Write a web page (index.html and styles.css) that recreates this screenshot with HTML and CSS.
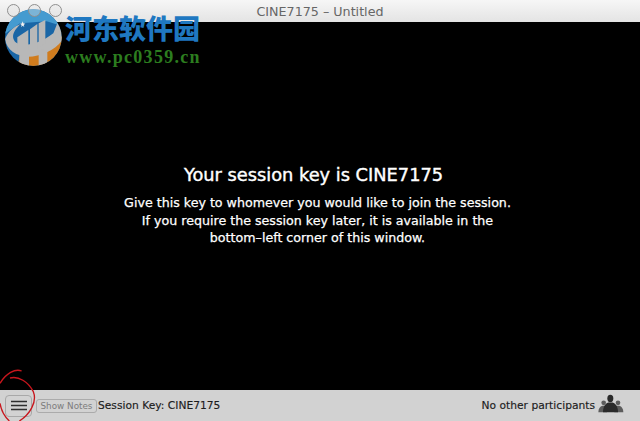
FILE: index.html
```html
<!DOCTYPE html>
<html>
  <head>
    <meta charset="UTF-8" />
    <title>CINE7175 - Untitled</title>
    <link rel="stylesheet" href="styles.css">
  </head>
  <body>
    <main class="window">
      <div class="titlebar">
        <div class="title">CINE7175 – Untitled</div>
      </div>
      <div class="stage">
        <h1>Your session key is CINE7175</h1>
        <p>Give this key to whomever you would like to join the session.<br>If you require the session key later, it is available in the<br>bottom–left corner of this window.</p>
      </div>
      <div class="bottom-bar">
        <div class="menu-button">
          <svg width="18" height="11" viewBox="0 0 18 11">
            <path d="M1 1.500h16M1 5.500h16M1 9.500h16" stroke="#2e2e2e" stroke-width="1.700" fill="none"/>
          </svg>
        </div>
        <div class="notes-button">Show Notes</div>
        <div class="session-key">Session Key: CINE7175</div>
        <div class="participants">No other participants</div>
        <svg class="people" width="28" height="19" viewBox="22 12 84 56">
          <g fill="#5c5c5c">
            <circle cx="42" cy="38" r="7"/>
            <path d="M26 66c0-10 5-17 12-19h8c4 2 6 6 6 19z"/>
            <circle cx="85" cy="38" r="7"/>
            <path d="M74 66c0-13 2-17 6-19h9c7 2 12 9 12 19z"/>
          </g>
          <g fill="#2a2a2a">
            <ellipse cx="62" cy="25" rx="9" ry="11"/>
            <path d="M40 66c0-15 6-26 16-29h13c10 3 16 14 16 29z"/>
          </g>
        </svg>
      </div>
      <svg class="red-circle" width="50" height="56" viewBox="0 0 150 168">
        <g fill="none" stroke="#c8161d" stroke-width="4">
          <path d="M65 18C45 10 18 25 0 55"/>
          <path d="M30 39C55 32 85 50 100 80C112 110 90 148 58 168"/>
          <path d="M0 115C4 138 14 155 28 168"/>
        </g>
      </svg>
      <div class="watermark">
        <svg class="logo" width="60" height="60" viewBox="9 24 180 180">
          <defs>
            <clipPath id="disc"><circle cx="100" cy="113" r="85"/></clipPath>
          </defs>
          <g clip-path="url(#disc)">
            <rect x="0" y="0" width="200" height="210" fill="#1a66a6"/>
            <path d="M0 0H200V82L140 64 60 70 0 112z" fill="#459bd0"/>
            <path d="M50 210 60 165 120 160 190 105 200 210z" fill="#d07c1e"/>
            <path d="M15 118C25 92 45 78 62 72 42 90 32 110 45 125 60 140 110 140 160 100L172 70C185 85 192 105 186 122 165 150 120 170 85 170 50 170 20 150 15 118z" fill="#b8b8b8"/>
            <path d="M52 112 85 90V150H52z" fill="#b8b8b8"/>
            <path d="M90 88 112 72V145H90z" fill="#b8b8b8"/>
            <path d="M116 70 136 60V130L116 142z" fill="#b8b8b8"/>
            <path d="M58 160H87V205H58z" fill="#b8b8b8"/>
            <path d="M116 155 142 140V205H116z" fill="#b8b8b8"/>
            <path d="M68 64l2 6 6 1-5 4 2 6-5-4-5 4 2-6-5-4 6-1z" fill="#f2f2f2"/>
          </g>
        </svg>
        <div class="watermark-text">
          <div class="site-name">河东软件园</div>
          <div class="site-url">www.pc0359.cn</div>
        </div>
      </div>
      <div class="traffic-lights">
        <div class="traffic-light"></div>
        <div class="traffic-light"></div>
        <div class="traffic-light"></div>
      </div>
    </main>
  </body>
</html>
```

FILE: styles.css
```css
html,
body {
  margin: 0;
  padding: 0;
  background: #000;
}

.window {
  width: 640px;
  height: 421px;
  position: relative;
  display: flex;
  flex-direction: column;
  overflow: hidden;
  font-family: "DejaVu Sans", sans-serif;
}

.titlebar {
  height: 22px;
  flex: none;
  display: flex;
  align-items: center;
  justify-content: center;
  background: linear-gradient(#f6f6f6, #e4e4e4);
}

.title {
  font-size: 12.700px;
  color: #666;
}

.traffic-lights {
  position: absolute;
  left: 7px;
  top: 4px;
  display: flex;
  gap: 8px;
}

.traffic-light {
  width: 11px;
  height: 11px;
  border: 1px solid #8f8f8f;
  border-radius: 50%;
  background: rgba(225, 225, 225, 0.35);
}

.stage {
  flex: 1;
  background: #000;
  color: #fff;
  text-align: center;
  padding: 141px 5px 0 0;
}

.stage h1 {
  margin: 0 8px 7px 0;
  font-size: 17.800px;
  font-weight: 400;
  line-height: 24px;
  -webkit-text-stroke: 0.4px #fff;
}

.stage p {
  margin: 0;
  font-size: 12.650px;
  line-height: 17.500px;
  -webkit-text-stroke: 0.25px #fff;
}

.bottom-bar {
  height: 31px;
  flex: none;
  display: flex;
  align-items: center;
  background: #d2d2d2;
  padding: 0 15px 0 5px;
  font-size: 10.700px;
  color: #1c1c1c;
  -webkit-text-stroke: 0.15px #1c1c1c;
}

.menu-button {
  width: 25px;
  height: 20px;
  display: flex;
  align-items: center;
  justify-content: center;
  border: 1px solid #a8a8a8;
  border-radius: 4px;
  margin-right: 4px;
}

.notes-button {
  width: 59px;
  height: 12px;
  line-height: 12px;
  text-align: center;
  border: 1px solid #ababab;
  border-radius: 3px;
  font-size: 8.800px;
  color: #7c7c7c;
  -webkit-text-stroke: 0;
  margin-right: 1px;
}

.participants {
  margin-left: auto;
  margin-right: 2px;
}

.people {
  margin-bottom: 4px;
}

.red-circle {
  position: absolute;
  left: 0;
  top: 365px;
}

.watermark {
  position: absolute;
  left: 3px;
  top: 8px;
  display: flex;
}

.watermark-text {
  margin-left: 2px;
  padding-top: 5px;
}

.site-name {
  font-family: "Noto Sans CJK SC", sans-serif;
  font-weight: 900;
  font-size: 27px;
  line-height: 30px;
  color: #1f78c1;
}

.site-url {
  font-family: "Liberation Serif", serif;
  font-weight: 700;
  font-size: 18px;
  line-height: 20px;
  letter-spacing: 1.300px;
  color: #2c7d1f;
  margin-top: 4px;
}
```
